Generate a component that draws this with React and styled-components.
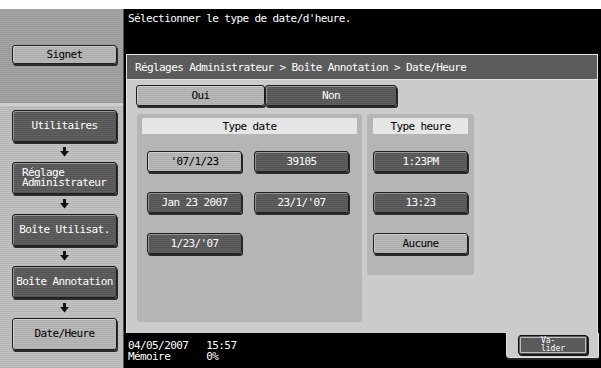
import React from "react";
import styled, { createGlobalStyle, css } from "styled-components";

const Global = createGlobalStyle`
  html, body { margin: 0; padding: 0; background: #fff; }
  body { font-family: "DejaVu Sans Mono", "Liberation Mono", monospace; font-size: 11px; letter-spacing: -0.6px; }
  * { box-sizing: border-box; }
`;

const Screen = styled.div`
  width: 601px;
  height: 368px;
  padding-top: 9px;
  background: #fff;
  display: flex;
  flex-direction: column;
  overflow: hidden;
`;

const Main = styled.div`
  flex: 1;
  display: flex;
  min-height: 0;
`;

const Sidebar = styled.div`
  width: 124px;
  display: flex;
  flex-direction: column;
  border-right: 1px solid #555;
`;

const SideTop = styled.div`
  height: 94px;
  padding: 36px 0 0 12px;
  background: repeating-linear-gradient(to bottom, #a4a4a4 0 1px, #999 1px 2px);
`;

const SideSep = styled.div`
  height: 3px;
  background: #cfcfcf;
`;

const SideBottom = styled.div`
  flex: 1;
  padding: 4px 0 0 12px;
  display: flex;
  flex-direction: column;
  background: repeating-linear-gradient(to bottom, #c2c2c2 0 1px, #b5b5b5 1px 2px);
`;

const darkFill = css`
  background: repeating-linear-gradient(to bottom, #616161 0 1px, #545454 1px 2px);
  color: #fff;
`;
const lightFill = css`
  background: repeating-linear-gradient(to bottom, #b9b9b9 0 1px, #adadad 1px 2px);
  color: #000;
`;

const Key = styled.div`
  ${(p) => (p.$dark ? darkFill : lightFill)}
  width: ${(p) => p.$w}px;
  height: ${(p) => p.$h}px;
  border: 1px solid #1e1e1e;
  border-radius: 3px;
  box-shadow: inset 1px 1px 0 rgba(255,255,255,0.35), 1px 2px 0 #2a2a2a;
  display: flex;
  align-items: center;
  justify-content: ${(p) => (p.$left ? "flex-start" : "center")};
  padding: ${(p) => (p.$left ? "0 0 0 9px" : "0")};
  font-size: 11px;
  line-height: 10px;
  white-space: pre;
  text-align: ${(p) => (p.$left ? "left" : "center")};
  flex-shrink: 0;
`;

const ArrowSlot = styled.div`
  height: 20px;
  width: 105px;
  display: flex;
  align-items: center;
  justify-content: center;
`;

const DownArrow = () => (
  <ArrowSlot>
    <svg width="9" height="10" viewBox="0 0 9 10">
      <rect x="3" y="0" width="3" height="5" fill="#111" />
      <polygon points="0,4 9,4 4.5,9.5" fill="#111" />
    </svg>
  </ArrowSlot>
);

const Right = styled.div`
  flex: 1;
  background: #000;
  display: flex;
  flex-direction: column;
  padding-left: 1px;
`;

const Prompt = styled.div`
  height: 45px;
  padding: 3px 0 0 3px;
  color: #fff;
  line-height: 14px;
`;

const Panel = styled.div`
  width: 472px;
  height: 279px;
  margin-left: 1px;
  border: 1px solid #e4e4e4;
  border-bottom: none;
  background: #cbcbcb;
  display: flex;
  flex-direction: column;
`;

const Crumb = styled.div`
  height: 25px;
  background: #5b5b5b;
  border-bottom: 1px solid #e2e2e2;
  color: #fff;
  padding: 0 0 0 8px;
  display: flex;
  align-items: center;
`;

const Body = styled.div`
  flex: 1;
  padding: 5px 0 0 9px;
  display: flex;
  flex-direction: column;
`;

const Toggle = styled.div`
  display: flex;
`;

const Groups = styled.div`
  margin-top: 8px;
  display: flex;
  align-items: flex-start;
  gap: 5px;
  padding-left: 1px;
`;

const Group = styled.div`
  width: ${(p) => p.$w}px;
  height: ${(p) => p.$h}px;
  background: #b5b5b5;
  border-radius: 3px;
  padding: 4px ${(p) => p.$px}px;
  display: flex;
  flex-direction: column;
`;

const GroupLabel = styled.div`
  height: 16px;
  background: #e6e6e6;
  color: #000;
  display: flex;
  align-items: center;
  justify-content: center;
`;

const DateGrid = styled.div`
  margin-top: 17px;
  padding-left: 5px;
  display: grid;
  grid-template-columns: 95px 95px;
  column-gap: 12px;
  row-gap: 20px;
`;

const TimeList = styled.div`
  margin-top: 17px;
  display: flex;
  flex-direction: column;
  gap: 20px;
`;

const Footer = styled.div`
  flex: 1;
  display: flex;
  justify-content: space-between;
  align-items: flex-start;
`;

const Status = styled.div`
  padding: 7px 0 0 3px;
  color: #fff;
  line-height: 11px;
  white-space: pre;
`;

const Tab = styled.div`
  width: 93px;
  height: 25px;
  margin-right: 2px;
  background: #cbcbcb;
  border: 1px solid #e4e4e4;
  border-top: none;
  border-bottom-left-radius: 4px;
  border-bottom-right-radius: 2px;
  padding: 2px 0 0 11px;
  box-shadow: 0 2px 0 #222;
`;

const Validate = styled.div`
  width: 70px;
  height: 20px;
  border: 1px solid #111;
  border-radius: 3px;
  background: #5a5a5a;
  box-shadow: inset 0 0 0 1px #5a5a5a, inset 0 0 0 2px #bdbdbd, 1px 1px 0 #222;
  color: #fff;
  font-size: 8px;
  line-height: 8px;
  letter-spacing: 0;
  white-space: pre;
  display: flex;
  align-items: center;
  justify-content: center;
  text-align: left;
`;

export default function App() {
  const side = [
    { t: "Utilitaires", dark: true },
    { t: "Réglage\nAdministrateur", dark: true, left: true },
    { t: "Boîte Utilisat.", dark: true },
    { t: "Boîte Annotation", dark: true },
    { t: "Date/Heure", dark: false },
  ];
  const dates = [
    { t: "'07/1/23", dark: false },
    { t: "39105", dark: true },
    { t: "Jan 23 2007", dark: true },
    { t: "23/1/'07", dark: true },
    { t: "1/23/'07", dark: true },
  ];
  const times = [
    { t: "1:23PM", dark: true },
    { t: "13:23", dark: true },
    { t: "Aucune", dark: false },
  ];
  return (
    <>
      <Global />
      <Screen>
        <Main>
          <Sidebar>
            <SideTop>
              <Key $w={105} $h={19}>Signet</Key>
            </SideTop>
            <SideSep />
            <SideBottom>
              {side.map((s, i) => (
                <React.Fragment key={s.t}>
                  {i > 0 && <DownArrow />}
                  <Key $w={105} $h={32} $dark={s.dark} $left={s.left}>
                    {s.t}
                  </Key>
                </React.Fragment>
              ))}
            </SideBottom>
          </Sidebar>
          <Right>
            <Prompt>Sélectionner le type de date/d'heure.</Prompt>
            <Panel>
              <Crumb>Réglages Administrateur &gt; Boîte Annotation &gt; Date/Heure</Crumb>
              <Body>
                <Toggle>
                  <Key $w={129} $h={21}>Oui</Key>
                  <Key $w={132} $h={21} $dark>Non</Key>
                </Toggle>
                <Groups>
                  <Group $w={225} $h={208} $px={5}>
                    <GroupLabel>Type date</GroupLabel>
                    <DateGrid>
                      {dates.map((d) => (
                        <Key key={d.t} $w={95} $h={21} $dark={d.dark}>{d.t}</Key>
                      ))}
                    </DateGrid>
                  </Group>
                  <Group $w={107} $h={161} $px={6}>
                    <GroupLabel>Type heure</GroupLabel>
                    <TimeList>
                      {times.map((d) => (
                        <Key key={d.t} $w={95} $h={21} $dark={d.dark}>{d.t}</Key>
                      ))}
                    </TimeList>
                  </Group>
                </Groups>
              </Body>
            </Panel>
            <Footer>
              <Status>{"04/05/2007   15:57\nMémoire      0%"}</Status>
              <Tab>
                <Validate>{"Va-\nlider"}</Validate>
              </Tab>
            </Footer>
          </Right>
        </Main>
      </Screen>
    </>
  );
}
